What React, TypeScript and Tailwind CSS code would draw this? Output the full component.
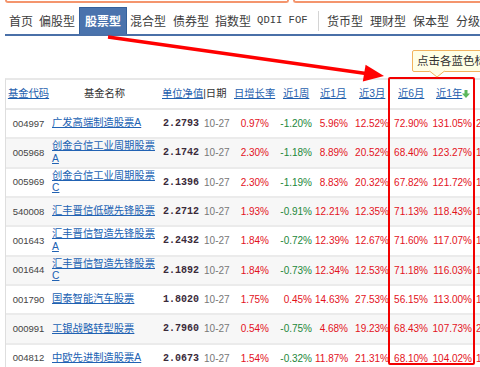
import React from "react";

type Row = {
  code: string;
  name: string;
  nav: string;
  vals: string[];
  next: string;
};

const rows: Row[] = [
  { code: "004997", name: "广发高端制造股票A", nav: "2.2793", vals: ["0.97%", "-1.20%", "5.96%", "12.52%", "72.90%", "131.05%"], next: "201.35%" },
  { code: "005968", name: "创金合信工业周期股票A", nav: "2.1742", vals: ["2.30%", "-1.18%", "8.89%", "20.52%", "68.40%", "123.27%"], next: "117.42%" },
  { code: "005969", name: "创金合信工业周期股票C", nav: "2.1396", vals: ["2.30%", "-1.19%", "8.83%", "20.32%", "67.82%", "121.72%"], next: "113.96%" },
  { code: "540008", name: "汇丰晋信低碳先锋股票", nav: "2.2712", vals: ["1.93%", "-0.91%", "12.21%", "12.35%", "71.13%", "118.43%"], next: "127.12%" },
  { code: "001643", name: "汇丰晋信智造先锋股票A", nav: "2.2432", vals: ["1.84%", "-0.72%", "12.39%", "12.67%", "71.60%", "117.07%"], next: "124.32%" },
  { code: "001644", name: "汇丰晋信智造先锋股票C", nav: "2.1892", vals: ["1.84%", "-0.73%", "12.34%", "12.53%", "71.18%", "116.03%"], next: "118.92%" },
  { code: "001790", name: "国泰智能汽车股票", nav: "1.8020", vals: ["1.75%", "0.45%", "14.63%", "27.53%", "56.15%", "113.00%"], next: "180.20%" },
  { code: "000991", name: "工银战略转型股票", nav: "2.7960", vals: ["0.54%", "-0.75%", "4.68%", "19.23%", "68.43%", "107.73%"], next: "279.60%" },
  { code: "004812", name: "中欧先进制造股票A", nav: "2.0673", vals: ["1.54%", "-0.32%", "11.87%", "21.31%", "68.10%", "104.02%"], next: "106.73%" },
];

const colW = ["w-[46px]", "w-[38px]", "w-[37px]", "w-[40px]", "w-[39px]", "w-[44px]"];
const valPr = ["pr-[8px]", "pr-[3px]", "pr-[4px]", "pr-[3px]", "pr-[3px]", "pr-[3px]"];

function Pct({ v, i }: { v: string; i: number }) {
  const neg = v.startsWith("-");
  return (
    <div className={`${colW[i]} ${valPr[i]} shrink-0 text-right text-[10px] ${neg ? "text-[#23873a]" : "text-[#e3121c]"}`}>
      {v}
    </div>
  );
}

export default function App() {
  return (
    <div className="relative w-[480px] h-[367px] overflow-hidden bg-white font-['Liberation_Sans','Noto_Sans_CJK_SC',sans-serif] text-[#333]">
      {/* orange box bottoms */}
      <div className="flex h-[3px]">
        <div className="ml-[5px] w-[284px] border-2 border-t-0 border-[#f4956d] rounded-b-[3px]" />
        <div className="ml-[4px] flex-1 border-2 border-t-0 border-r-0 border-[#f4956d] rounded-bl-[3px]" />
      </div>

      {/* tabs */}
      <div className="mt-[4px] flex items-center h-[27px] text-[12px] text-[#3c3c3c] whitespace-nowrap font-['Noto_Sans_CJK_SC',sans-serif]">
        <span className="ml-[9px]">首页</span>
        <span className="ml-[6px]">偏股型</span>
        <span className="ml-[4px] h-[27px] px-[5px] flex items-center bg-[#4a73ad] border border-[#34609b] border-b-0 text-white font-bold">股票型</span>
        <span className="ml-[3px]">混合型</span>
        <span className="ml-[7px]">债券型</span>
        <span className="ml-[6px]">指数型</span>
        <span className="ml-[6px] font-['Liberation_Mono',monospace] text-[10.5px]">QDII FOF</span>
        <span className="ml-[10px] w-px h-[20px] bg-[#d4d4d4]" />
        <span className="ml-[9px]">货币型</span>
        <span className="ml-[7px]">理财型</span>
        <span className="ml-[7px]">保本型</span>
        <span className="ml-[7px]">分级</span>
      </div>
      <div className="ml-[5px] h-[2px] bg-[#4a70a8]" />

      <div className="h-[42px]" />

      {/* table */}
      <div className="ml-[5px] border-l border-[#dedede] border-t-2 border-t-[#e8e8e8] font-['Liberation_Sans','Noto_Sans_CJK_SC',sans-serif]">
        <div className="flex items-center h-[30px] border-b-2 border-[#e8e8e8] text-[10.3px] whitespace-nowrap">
          <div className="w-[45px] shrink-0 text-center text-[#1f5fae] underline">基金代码</div>
          <div className="w-[107px] shrink-0 text-center text-[#333]">基金名称</div>
          <div className="w-[73px] shrink-0 pl-[4px]">
            <span className="text-[#1f5fae] underline">单位净值</span>
            <span className="text-[#333]">|日期</span>
          </div>
          <div className="w-[46px] shrink-0 pl-[3px] text-[#1f5fae] underline">日增长率</div>
          <div className="w-[38px] shrink-0 pl-[6px]"><span className="text-[#1f5fae] underline">近1周</span></div>
          <div className="w-[37px] shrink-0 pl-[5px]"><span className="text-[#1f5fae] underline">近1月</span></div>
          <div className="w-[40px] shrink-0 pl-[7px]"><span className="text-[#1f5fae] underline">近3月</span></div>
          <div className="w-[39px] shrink-0 pl-[6px]"><span className="text-[#1f5fae] underline">近6月</span></div>
          <div className="w-[44px] shrink-0 pl-[5px] flex items-center">
            <span className="text-[#1f5fae] underline">近1年</span>
            <svg width="8" height="8" viewBox="0 0 8 8" className="ml-[0px]">
              <rect x="2.5" y="0" width="3" height="4" fill="#5cb85c" />
              <polygon points="0,3.5 8,3.5 4,8" fill="#5cb85c" />
            </svg>
          </div>
        </div>

        {rows.map((r, idx) => (
          <div
            key={r.code}
            className={`flex items-center h-[29.33px] border-b-2 border-[#ebebeb] whitespace-nowrap ${idx % 2 === 1 ? "bg-[#f7f7f7]" : "bg-white"}`}
          >
            <div className="w-[45px] shrink-0 text-center text-[9.5px] text-[#444]">{r.code}</div>
            <div className="w-[107px] shrink-0 pl-[1px] pr-[2px] whitespace-normal text-[10.3px] leading-[12.5px]">
              <span className="text-[#2162b3] underline">{r.name}</span>
            </div>
            <div className="w-[73px] shrink-0 pl-[5px] flex items-center">
              <span className="font-['Liberation_Mono',monospace] font-bold text-[10px] text-[#3a2a3a]">{r.nav}</span>
              <span className="ml-[5px] text-[10px] text-[#777]">10-27</span>
            </div>
            {r.vals.map((v, i) => (
              <Pct key={i} v={v} i={i} />
            ))}
            <div className="shrink-0 pl-[1px] text-[10px] text-[#e3121c]">{r.next}</div>
          </div>
        ))}
      </div>

      {/* red highlight box */}
      <div className="absolute left-[388px] top-[77px] w-[87px] h-[288px] border-2 border-[#f20000] rounded-[2px] pointer-events-none" />

      {/* tooltip */}
      <div className="absolute left-[412px] top-[50px] w-[110px] h-[22px] bg-[#ffffe6] border border-[#f2b35e] rounded-[2px] pl-[4px] flex items-center text-[11.5px] text-[#333] whitespace-nowrap font-['Noto_Sans_CJK_SC',sans-serif]">
        点击各蓝色标签排序
      </div>
      <svg className="absolute left-[429px] top-[70px] pointer-events-none" width="16" height="8" viewBox="0 0 16 8">
        <polygon points="0,1 16,1 8,7" fill="#ffffe6" />
        <polyline points="0.5,1 8,7 15.5,1" fill="none" stroke="#f2b35e" strokeWidth="1" />
      </svg>

      {/* red arrow */}
      <svg className="absolute left-0 top-0 pointer-events-none" width="480" height="367" viewBox="0 0 480 367">
        <line x1="108" y1="37" x2="366" y2="73.5" stroke="#f00" strokeWidth="3.5" />
        <polygon points="384,76 362.8,81.6 365.6,64.8" fill="#f00" />
      </svg>
    </div>
  );
}
